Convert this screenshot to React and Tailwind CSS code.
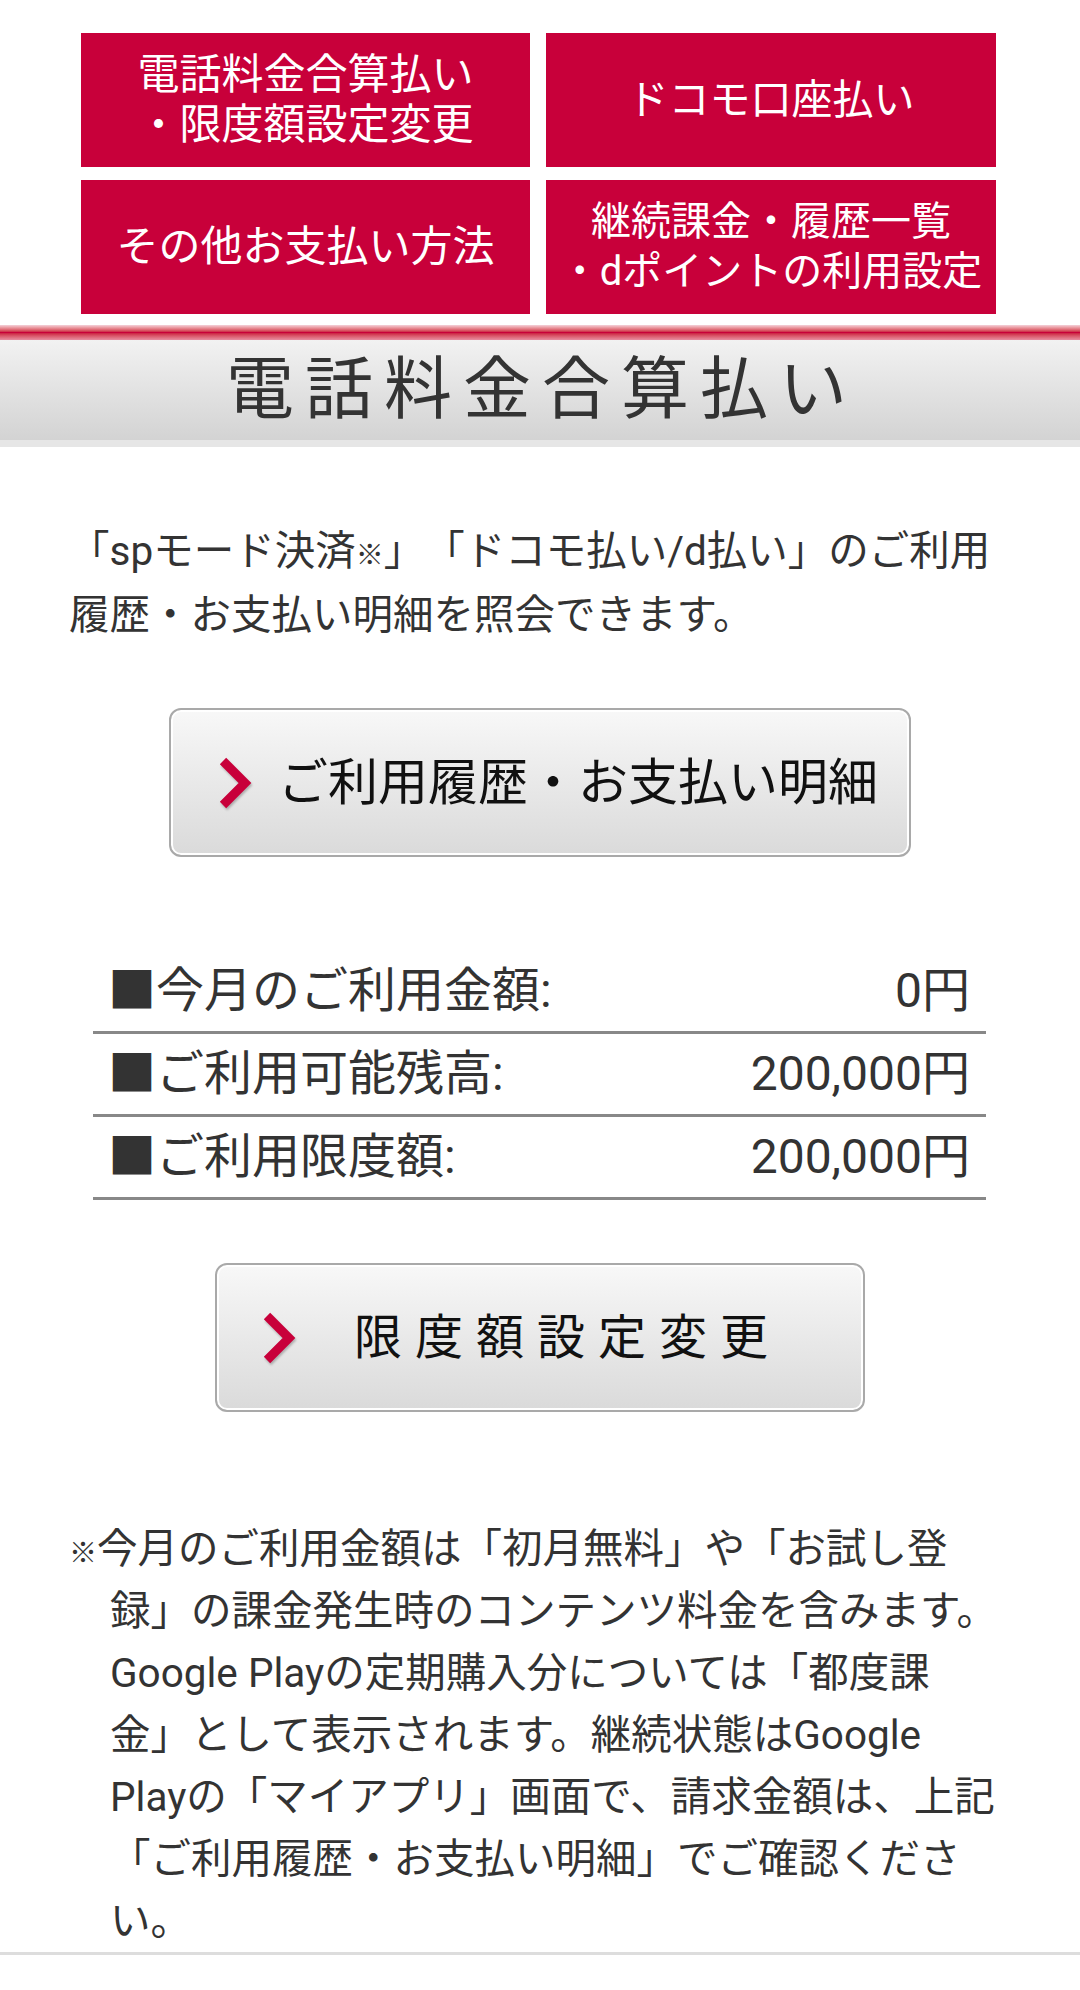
import React from "react";

const FONT = { fontFamily: '"Roboto", "Noto Sans CJK JP", sans-serif' };

function Chevron() {
  return (
    <svg width="34" height="52" viewBox="0 0 34 52" className="shrink-0 drop-shadow-[1px_2px_1px_rgba(0,0,0,0.25)]">
      <polyline points="5,4 27,26 5,48" fill="none" stroke="#c8003a" strokeWidth="9" strokeLinejoin="miter" strokeMiterlimit="10" />
    </svg>
  );
}

function Kome() {
  return <span className="text-[28px] leading-none">※</span>;
}

function GrayButton({ width, pad, gap, children }) {
  return (
    <div className={`mx-auto ${width} h-[149px] rounded-[12px] border-2 border-[#a9a9a9] bg-linear-to-b from-[#f8f8f8] to-[#dadada] shadow-[inset_0_0_0_2px_#ffffff] flex items-center ${pad} ${gap}`}>
      <Chevron />
      {children}
    </div>
  );
}

export default function App() {
  return (
    <div className="w-[1080px] min-h-[1990px] bg-white overflow-hidden [text-spacing-trim:space-all]" style={FONT}>
      {/* top red menu */}
      <div className="pt-[33px] pl-[81px]">
        <div className="grid grid-cols-[449px_450px] gap-x-[16px] gap-y-[13px] w-[915px]">
          <div className="h-[134px] bg-[#c8003a] text-white text-[42px] leading-[50px] flex flex-col items-center justify-center">
            <span>電話料金合算払い</span>
            <span>・限度額設定変更</span>
          </div>
          <div className="h-[134px] bg-[#c8003a] text-white text-[41px] leading-[50px] flex items-center justify-center">
            <span>ドコモ口座払い</span>
          </div>
          <div className="h-[134px] bg-[#c8003a] text-white text-[42px] leading-[50px] flex items-center justify-center">
            <span>その他お支払い方法</span>
          </div>
          <div className="h-[134px] bg-[#c8003a] text-white text-[40px] leading-[50px] flex flex-col items-center justify-center">
            <span>継続課金・履歴一覧</span>
            <span>・dポイントの利用設定</span>
          </div>
        </div>
      </div>

      {/* section header */}
      <div className="mt-[11px] h-[15px] bg-linear-to-b from-[#f3d2da] via-[#c8003a] to-[#e88ea2]" />
      <div className="h-[100px] bg-linear-to-b from-[#f2f2f2] to-[#d3d3d3] flex items-center justify-center">
        <h1 className="text-[68px] leading-none tracking-[11px] pl-[4px] text-[#333333] font-normal">電話料金合算払い</h1>
      </div>
      <div className="h-[7px] bg-[#e6e6e6]" />

      {/* intro */}
      <p className="mt-[72px] pl-[69px] text-[40.5px] leading-[64px] text-[#333333] whitespace-nowrap">
        「spモード決済<Kome />」「ドコモ払い/d払い」のご利用
        <br />
        履歴・お支払い明細を照会できます。
      </p>

      <div className="mt-[61px]">
        <GrayButton width="w-[742px]" pad="pl-[47px]" gap="gap-[26px]">
          <span className="text-[50px] leading-none text-[#111111]">ご利用履歴・お支払い明細</span>
        </GrayButton>
      </div>

      {/* amounts table */}
      <div className="mt-[94px] ml-[93px] w-[893px] text-[48px] text-[#333333]">
        {[
          ["■今月のご利用金額:", "0円"],
          ["■ご利用可能残高:", "200,000円"],
          ["■ご利用限度額:", "200,000円"],
        ].map(([label, value]) => (
          <div key={label} className="h-[83px] border-b-[3px] border-[#888888] flex items-center justify-between pl-[15px] pr-[16px]">
            <span className="leading-none">{label}</span>
            <span className="leading-none">{value}</span>
          </div>
        ))}
      </div>

      <div className="mt-[63px]">
        <GrayButton width="w-[650px]" pad="pl-[45px]" gap="gap-[58px]">
          <span className="text-[48px] leading-none tracking-[13px] text-[#111111]">限度額設定変更</span>
        </GrayButton>
      </div>

      {/* note */}
      <p className="mt-[106px] pl-[110px] -indent-[41px] text-[40.5px] leading-[62px] text-[#333333] whitespace-nowrap">
        <Kome />今月のご利用金額は「初月無料」や「お試し登
        <br />
        録」の課金発生時のコンテンツ料金を含みます。
        <br />
        Google Playの定期購入分については「都度課
        <br />
        金」として表示されます。継続状態はGoogle
        <br />
        Playの「マイアプリ」画面で、請求金額は、上記
        <br />
        「ご利用履歴・お支払い明細」でご確認くださ
        <br />
        い。
      </p>
      <div className="h-[3px] bg-[#dddddd]" />
    </div>
  );
}
